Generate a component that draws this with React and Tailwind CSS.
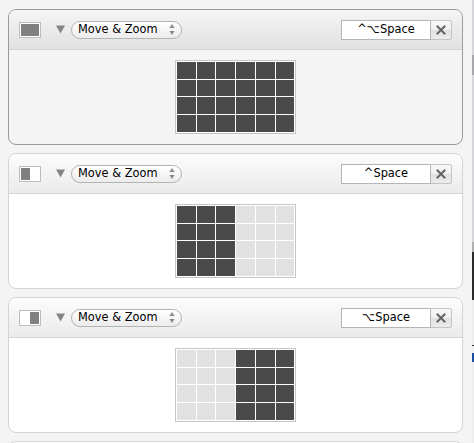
const rows = [
  { shortcut: '^⌥Space', active: true, icon: 'full', cells: 'all' },
  { shortcut: '^Space', icon: 'left', cells: 'left' },
  { shortcut: '⌥Space', icon: 'right', cells: 'right' },
];

const colW = ['w-[19px]', 'w-[18px]', 'w-[19px]', 'w-[19px]', 'w-[19px]', 'w-[18px]'];
const rowH = ['h-[17px]', 'h-[16px]', 'h-[17px]', 'h-[17px]'];

function Grid({ cells }) {
  return (
    <div className="flex flex-col gap-px border border-[#c6c6c6] bg-white p-px">
      {rowH.map((h, r) => (
        <div key={r} className="flex gap-px">
          {colW.map((w, c) => {
            const on = cells === 'all' || (cells === 'left' && c < 3) || (cells === 'right' && c >= 3);
            return <div key={c} className={`${w} ${h} ${on ? 'bg-[#4a4a4a]' : 'bg-[#e1e1e1]'}`} />;
          })}
        </div>
      ))}
    </div>
  );
}

function ScreenIcon({ type }) {
  return (
    <div className="flex h-[16px] w-[22px] border border-[#bdbdbd] bg-white p-px">
      {type === 'full' && <div className="flex-1 bg-[#808080]" />}
      {type === 'left' && <div className="h-full w-[9px] bg-[#808080]" />}
      {type === 'right' && <div className="ml-auto h-full w-[9px] bg-[#808080]" />}
    </div>
  );
}

function Popup() {
  return (
    <div className="flex h-[18px] w-[111px] items-center justify-between rounded-full border border-[#b4b4b4] bg-gradient-to-b from-white to-[#ececec] pl-[6px] pr-[6px] text-[11.4px] text-black">
      <span className="pt-px">Move &amp; Zoom</span>
      <svg viewBox="0 0 6 11" className="h-[11px] w-[6px]" fill="#8a8a8a">
        <path d="M3 0l2.6 4H.4zM3 11L.4 7h5.2z" />
      </svg>
    </div>
  );
}

function Card({ row }) {
  return (
    <div
      className={`h-[136px] overflow-hidden rounded-[8px] border ${
        row.active ? 'border-[#9a9a9a] bg-[#f4f4f4]' : 'border-[#d4d4d4] bg-white'
      }`}
    >
      <div
        className={`flex h-[40px] items-center border-b border-[#d2d2d2] bg-gradient-to-b pl-[10px] pr-[10px] ${
          row.active ? 'from-[#f5f5f5] to-[#e1e1e1]' : 'from-[#fcfcfc] to-[#ebebeb]'
        }`}
      >
        <ScreenIcon type={row.icon} />
        <svg viewBox="0 0 10 9" className="ml-[15px] mr-[6px] h-[9px] w-[9px]" fill="#858585">
          <path d="M0 0h10L5 9z" />
        </svg>
        <Popup />
        <div className="ml-auto flex h-[20px]">
          <div className="flex w-[90px] items-center justify-center border border-[#b5b5b5] bg-white pt-px text-[11.4px] text-black">
            {row.shortcut}
          </div>
          <div className="flex w-[21px] items-center justify-center rounded-r-[3px] border border-l-0 border-[#c4c4c4] bg-[linear-gradient(#f8f8f8_0%,#f0f0f0_50%,#e0e0e0_51%,#ececec_100%)]">
            <svg viewBox="0 0 10 10" className="h-[10px] w-[10px]" stroke="#666666" strokeWidth="2" fill="none">
              <path d="M.8.8l8.4 8.4M9.2.8L.8 9.2" />
            </svg>
          </div>
        </div>
      </div>
      <div className="flex justify-center pt-[10px]">
        <Grid cells={row.cells} />
      </div>
    </div>
  );
}

// sliver of the neighbouring window along the right edge
function EdgeStrip() {
  return (
    <div className="flex h-[443px] w-[2px] shrink-0 flex-col bg-[#d6d6da]">
      <div className="h-[55px]" />
      <div className="h-[20px] bg-[#a9a9ad]" />
      <div className="h-[167px]" />
      <div className="h-[10px] bg-[#b0b0b0]" />
      <div className="h-[48px] bg-[#2b2b2b]" />
      <div className="h-[45px] bg-[#ececec]" />
      <div className="h-px bg-[#30343c]" />
      <div className="h-[7px] bg-[#f0f0f0]" />
      <div className="h-[9px] bg-[#1d4fa0]" />
      <div className="flex-1 bg-[#eeeeee]" />
    </div>
  );
}

export default function App() {
  return (
    <div className="flex h-[443px] w-[474px] overflow-hidden bg-[#f4f4f4] font-['DejaVu_Sans',sans-serif]">
      <div className="flex-1 pl-[8px] pr-[9px] pt-[9px]">
        <div className="flex flex-col gap-[8px]">
          {rows.map((row) => (
            <Card key={row.shortcut} row={row} />
          ))}
          <div className="h-[20px] rounded-[8px] border border-[#d4d4d4] bg-white" />
        </div>
      </div>
      <EdgeStrip />
    </div>
  );
}
